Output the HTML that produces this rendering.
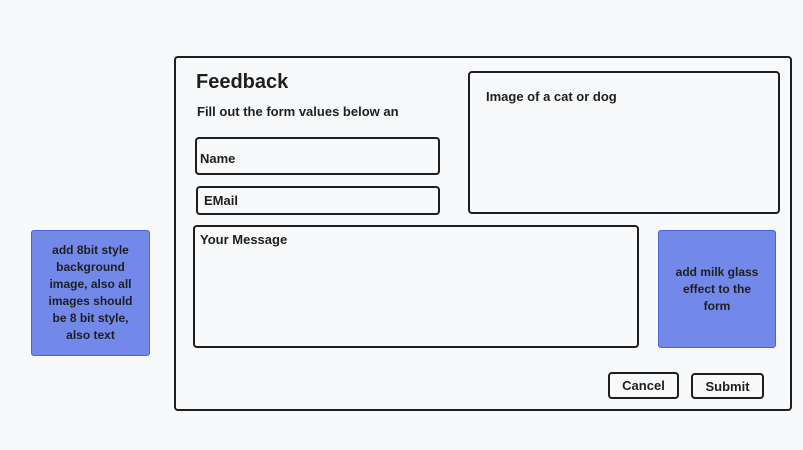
<!DOCTYPE html>
<html><head><meta charset="utf-8"><style>
*{margin:0;padding:0;box-sizing:border-box}
body{width:803px;height:450px;background:#f8f9fa;position:relative;overflow:hidden;font-family:"Liberation Sans",sans-serif;color:#1e1e1e}
.b{position:absolute;border:2px solid #1e1e1e;border-radius:4px}
.t{position:absolute;font-size:13px;font-weight:bold;white-space:nowrap}
.btn{position:absolute;border:2px solid #1e1e1e;border-radius:4px;font-size:13px;font-weight:bold;display:flex;align-items:center;justify-content:center}
.blue{position:absolute;background:#7289ea;border:1px solid #4a63d8;border-radius:3px;font-size:12px;font-weight:bold;text-align:center;display:flex;align-items:center;justify-content:center;line-height:17px;color:#1e1e1e;white-space:nowrap}
</style></head><body>
<div class="b" style="left:174px;top:56px;width:618px;height:355px"></div>
<div class="t" style="left:196px;top:71px;font-size:20px">Feedback</div>
<div class="t" style="left:197px;top:104px">Fill out the form values below an</div>
<div class="b" style="left:195px;top:137px;width:245px;height:38px"></div>
<div class="t" style="left:200px;top:151px">Name</div>
<div class="b" style="left:196px;top:186px;width:244px;height:29px"></div>
<div class="t" style="left:204px;top:193px">EMail</div>
<div class="b" style="left:468px;top:71px;width:312px;height:143px"></div>
<div class="t" style="left:486px;top:89px">Image of a cat or dog</div>
<div class="b" style="left:193px;top:225px;width:446px;height:123px"></div>
<div class="t" style="left:200px;top:232px">Your Message</div>
<div class="blue" style="left:658px;top:230px;width:118px;height:118px">add milk glass<br>effect to the<br>form</div>
<div class="blue" style="left:31px;top:230px;width:119px;height:126px">add 8bit style<br>background<br>image, also all<br>images should<br>be 8 bit style,<br>also text</div>
<div class="btn" style="left:608px;top:372px;width:71px;height:27px">Cancel</div>
<div class="btn" style="left:691px;top:373px;width:73px;height:26px">Submit</div>
</body></html>
